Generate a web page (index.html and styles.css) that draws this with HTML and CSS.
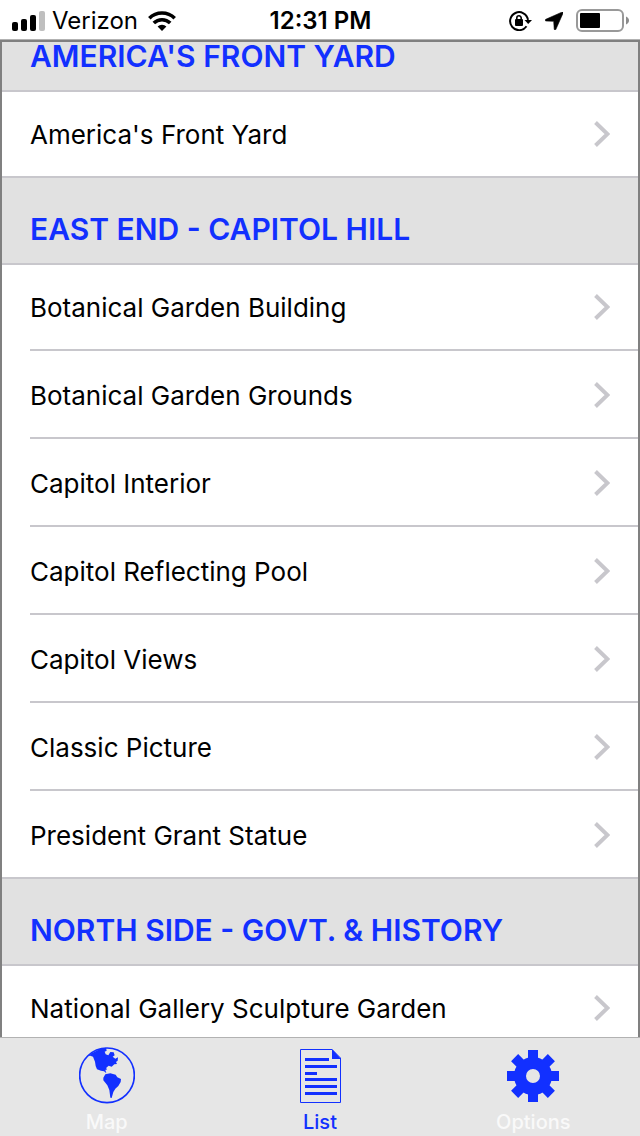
FILE: index.html
```
<!DOCTYPE html>
<html lang="en">
<head>
  <meta charset="UTF-8">
  <meta name="viewport" content="width=device-width, initial-scale=1.0">
  <title>List</title>
  <link rel="stylesheet" href="styles.css">
</head>
<body>
  <!-- Status bar -->
  <header class="status-bar">
    <div class="status-left">
      <svg class="signal" width="34" height="20" viewBox="0 0 34 20" aria-hidden="true">
        <rect x="0" y="11" width="6" height="9" rx="2"/>
        <rect x="9" y="8" width="6" height="12" rx="2"/>
        <rect x="18" y="4" width="6" height="16" rx="2"/>
        <rect x="27" y="0" width="6" height="20" rx="2" fill="#bfbfbf"/>
      </svg>
      <span class="carrier">Verizon</span>
      <svg width="28" height="20" viewBox="0 0 28 20" fill="none" stroke="#000" stroke-width="3.6" aria-hidden="true">
        <path d="M1.3 7.2a18.2 18.2 0 0 1 25.4 0"/>
        <path d="M5.8 12a11.8 11.8 0 0 1 16.4 0"/>
        <path d="M14 20l-4.4-4.5a6.3 6.3 0 0 1 8.8 0z" fill="#000" stroke="none"/>
      </svg>
    </div>
    <time class="status-time">12:31 PM</time>
    <div class="status-right">
      <svg width="23" height="20" viewBox="0 0 23 20" aria-hidden="true">
        <path d="M17.5 15.3A9 9 0 1 1 19 8.800" fill="none" stroke="#000" stroke-width="2"/>
        <path d="M15.5 9H23L19.2 13z"/>
        <rect x="6" y="8" width="8" height="7" rx="1"/>
        <path d="M7.8 9V7a2.2 2.2 0 0 1 4.4 0v2" fill="none" stroke="#000" stroke-width="1.6"/>
      </svg>
      <svg width="18" height="18" viewBox="0 0 18 18" aria-hidden="true">
        <path d="M16.8.2L.8 7.3c-1 .5-.9 1.7.3 1.7l7.6.3.5 7.7c0 1.2 1.2 1.3 1.7.3L18 1.2C18.3.4 17.7-.1 16.8.2z" stroke="#000" stroke-width=".6"/>
      </svg>
      <svg width="53" height="24" viewBox="0 0 53 24" aria-hidden="true">
        <rect x="1" y="1" width="46" height="21" rx="5" fill="none" stroke="#999" stroke-width="2"/>
        <rect x="4" y="4" width="20" height="15" rx="1"/>
        <path d="M50 7.5c4 1.5 4 6.5 0 8z" fill="#8c8c8c"/>
      </svg>
    </div>
  </header>

  <!-- Places -->
  <main class="place-list">
    <section>
      <h2 class="section-title section-title-scrolled">AMERICA'S FRONT YARD</h2>
      <ul>
        <li><a href="#">America's Front Yard <svg class="chevron" viewBox="0 0 16 26"><path d="M1.5 1.5L13.5 13L1.5 24.5"/></svg></a></li>
      </ul>
    </section>
    <section>
      <h2 class="section-title">EAST END - CAPITOL HILL</h2>
      <ul>
        <li><a href="#">Botanical Garden Building <svg class="chevron" viewBox="0 0 16 26"><path d="M1.5 1.5L13.5 13L1.5 24.5"/></svg></a></li>
        <li><a href="#">Botanical Garden Grounds <svg class="chevron" viewBox="0 0 16 26"><path d="M1.5 1.5L13.5 13L1.5 24.5"/></svg></a></li>
        <li><a href="#">Capitol Interior <svg class="chevron" viewBox="0 0 16 26"><path d="M1.5 1.5L13.5 13L1.5 24.5"/></svg></a></li>
        <li><a href="#">Capitol Reflecting Pool <svg class="chevron" viewBox="0 0 16 26"><path d="M1.5 1.5L13.5 13L1.5 24.5"/></svg></a></li>
        <li><a href="#">Capitol Views <svg class="chevron" viewBox="0 0 16 26"><path d="M1.5 1.5L13.5 13L1.5 24.5"/></svg></a></li>
        <li><a href="#">Classic Picture <svg class="chevron" viewBox="0 0 16 26"><path d="M1.5 1.5L13.5 13L1.5 24.5"/></svg></a></li>
        <li><a href="#">President Grant Statue <svg class="chevron" viewBox="0 0 16 26"><path d="M1.5 1.5L13.5 13L1.5 24.5"/></svg></a></li>
      </ul>
    </section>
    <section>
      <h2 class="section-title">NORTH SIDE - GOVT. &amp; HISTORY</h2>
      <ul>
        <li><a href="#">National Gallery Sculpture Garden <svg class="chevron" viewBox="0 0 16 26"><path d="M1.5 1.5L13.5 13L1.5 24.5"/></svg></a></li>
      </ul>
    </section>
  </main>

  <!-- Tab bar -->
  <nav class="tab-bar">
    <a href="#" class="tab">
      <svg width="56" height="58" viewBox="54 48 168 174" aria-hidden="true">
        <circle cx="138" cy="136" r="82" fill="none" stroke="#1230ff" stroke-width="5"/>
        <path d="M82 79L92 70L104 64L118 56L135 53L137 62L131 65L134 73L142 76L148 66L158 67L161 76L155 80L163 86L171 82L170 92L165 96L168 102L160 103L152 110L143 107L136 113L137 120L133 119L136 130L129 124L120 122L108 118L104 108L102 95L96 80L88 77Z"/>
        <path d="M133 133L148 130L164 134L169 142L180 147L179 156L172 168L163 176L157 186L152 204L148 203L145 180L139 166L127 151L127 143Z"/>
      </svg>
      Map
    </a>
    <a href="#" class="tab active" aria-current="page">
      <svg width="42" height="58" viewBox="0 0 42 58" aria-hidden="true">
        <path d="M1.5 3.5H33L41.5 12V56.5H1.5Z" fill="none" stroke="#1230ff"/>
        <path d="M33 3V13H42Z"/>
        <path d="M6 12h24v3H6zM6 19h32v3H6zM6 26h12v3H6zM6 32h32v3H6zM6 39h32v3H6zM6 46h32v3H6z"/>
      </svg>
      List
    </a>
    <a href="#" class="tab">
      <svg width="52" height="58" viewBox="-26 -30 52 58" aria-hidden="true">
        <circle r="13" fill="none" stroke="#1230ff" stroke-width="12"/>
        <path d="M-5 -26H5V-16H-5zM-5 16H5V26H-5zM-26 -5H-16V5H-26zM16 -5H26V5H16z"/>
        <path d="M-5 -26H5V-16H-5zM-5 16H5V26H-5zM-26 -5H-16V5H-26zM16 -5H26V5H16z" transform="rotate(45)"/>
      </svg>
      Options
    </a>
  </nav>
</body>
</html>
```
FILE: styles.css
```
* {
  box-sizing: border-box;
}

body {
  font-family: Inter, "Liberation Sans", sans-serif;
  margin: 0;
  height: 100vh;
  display: flex;
  flex-direction: column;
  background-color: #ffffff;
  color: #000000;
}

a {
  color: inherit;
  text-decoration: none;
}

.status-bar {
  display: grid;
  grid-template-columns: 1fr auto 1fr;
  align-items: center;
  height: 40px;
  padding: 2px 11px 0 12px;
  border-bottom: 1px solid #b2b2b2;
}

.status-left,
.status-right {
  display: flex;
  align-items: center;
}

.status-left {
  gap: 6px;
}

.carrier {
  font-size: 24px;
  margin-right: 4px;
}

.status-time {
  font-size: 24px;
  font-weight: 600;
}

.status-right {
  justify-content: flex-end;
  gap: 13px;
}

.place-list {
  flex: 1;
  min-height: 0;
  overflow: hidden;
  border: 2px solid #808080;
  border-bottom: none;
}

.section-title {
  display: flex;
  align-items: flex-end;
  height: 87px;
  margin: 0;
  padding: 0 28px 20px;
  background-color: #e1e1e1;
  border-bottom: 2px solid #c8c7cc;
  color: #1230ff;
  font-size: 30px;
  line-height: 28px;
  font-weight: 600;
}

/* top of the first section is scrolled out of view */
.section-title-scrolled {
  height: 50px;
}

ul {
  list-style: none;
  margin: 0;
  padding: 0;
}

li {
  padding-left: 28px;
}

li a {
  display: flex;
  justify-content: space-between;
  align-items: center;
  height: 88px;
  padding: 2px 28px 0 0;
  border-bottom: 2px solid #c8c7cc;
  font-size: 26px;
}

li:first-child a {
  height: 86px;
  padding-top: 0;
}

/* divider before the next section goes edge to edge */
li:last-child {
  padding-left: 0;
}

li:last-child a {
  padding-left: 28px;
}

.chevron {
  width: 16px;
  height: 26px;
  fill: none;
  stroke: #c8c7cc;
  stroke-width: 4;
}

.tab-bar {
  display: grid;
  grid-template-columns: repeat(3, 1fr);
  height: 99px;
  background-color: #e6e6e6;
  border-top: 1px solid #b2b2b2;
}

.tab {
  display: flex;
  flex-direction: column;
  align-items: center;
  gap: 6px;
  padding-top: 8px;
  color: #f9f9f9;
  font-size: 20px;
  line-height: 24px;
  font-weight: 500;
}

.tab svg {
  fill: #1230ff;
}

.tab.active {
  color: #1230ff;
}
```
